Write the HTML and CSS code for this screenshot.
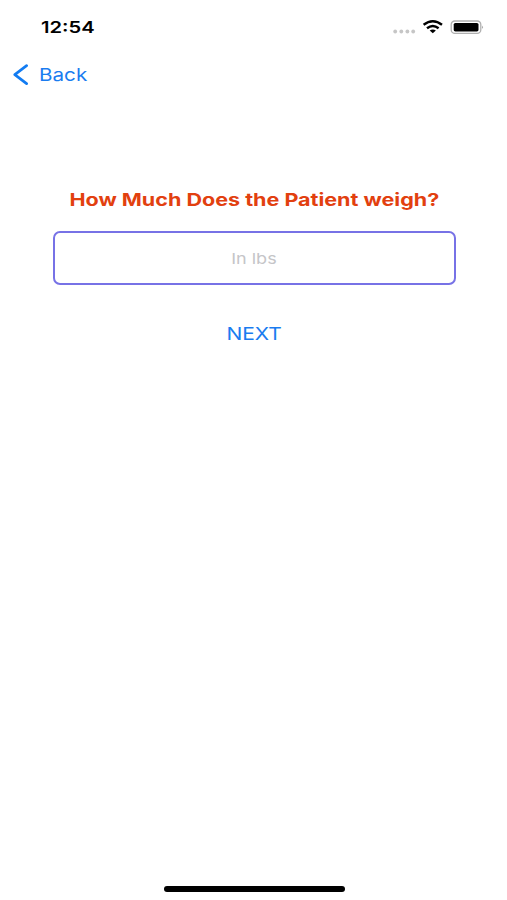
FILE: index.html
```html
<!DOCTYPE html>
<html lang="en">
<head>
<meta charset="utf-8">
<title>Patient weight</title>
<link rel="stylesheet" href="styles.css">
</head>
<body>
<div class="screen">
  <header class="status">
    <span class="time">12:54</span>
    <svg class="indicators" width="92" height="18" viewBox="0 0 92 18" aria-hidden="true">
      <g fill="#c6c6c6"><circle cx="3.2" cy="8.5" r="1.9"/><circle cx="9.3" cy="8.5" r="1.9"/><circle cx="15.4" cy="8.5" r="1.9"/><circle cx="21.2" cy="8.5" r="1.9"/></g>
      <g transform="translate(30.5 -3)" fill="none" stroke="#000" stroke-width="2.4">
        <path d="M1.1 4.8Q10.3-2.3 19.5 4.8"/>
        <path d="M4.5 8.3Q10.3 3.7 16.1 8.3"/>
        <path d="M7.2 10.5Q10.3 8.4 13.4 10.5L10.3 13.3Z" fill="#000" stroke="none"/>
      </g>
      <rect x="59.2" y="-2" width="29.6" height="12.4" rx="3.6" fill="#fff" stroke="#b0b0b0" stroke-width="1.3"/>
      <rect x="61.7" y="0" width="24.8" height="8.4" rx="1.6" fill="#000"/>
      <path d="M90.2 2.5Q92 4.1 90.2 5.9Z" fill="#8e8e8e"/>
    </svg>
  </header>
  <nav class="nav">
    <a class="back"><svg width="17" height="22" viewBox="0 0 17 22" aria-hidden="true"><path d="M14.6 1.6L2.8 10.6L14.6 19.6" fill="none" stroke="#127cf2" stroke-width="2.7" stroke-linecap="round" stroke-linejoin="round"/></svg><span class="back-label">Back</span></a>
  </nav>
  <main class="form">
    <h1 class="question"><span>How Much Does the Patient weigh?</span></h1>
    <div class="field"><span>In lbs</span></div>
    <div class="next"><span>NEXT</span></div>
  </main>
  <div class="home"></div>
</div>
</body>
</html>
```
FILE: styles.css
```css
* { box-sizing: border-box; }
body { margin: 0; background: #fff; font-family: Inter, sans-serif; }
.screen { width: 507px; height: 900px; display: flex; flex-direction: column; overflow: hidden; }
.status { height: 54px; padding: 0 23px 0 41px; display: flex; align-items: center; justify-content: space-between; }
.time { font-size: 16px; font-weight: 600; transform: scaleX(1.26); transform-origin: left; }
.indicators { margin-top: 10px; overflow: visible; }
.nav { height: 41px; padding-left: 11.5px; display: flex; align-items: center; }
.back { display: flex; align-items: center; gap: 10.5px; color: #1a7cf0; }
.back-label { font-size: 17.5px; transform: scaleX(1.18); transform-origin: left; }
.form { flex: 1; padding: 92px 51.5px 0 52.5px; display: flex; flex-direction: column; align-items: center; }
.question { margin: 0; height: 25px; line-height: 25px; font-size: 17.5px; font-weight: 700; color: #e2400f; white-space: nowrap; }
.question span, .field span, .next span { display: inline-block; transform: scaleX(1.2); }
.question span { transform: scaleX(1.23); }
.field { width: 403px; height: 54px; margin-top: 19px; border: 2px solid #7772e6; border-radius: 7px; display: flex; align-items: center; justify-content: center; font-size: 15px; color: #c5c5c8; }
.next { margin-top: 36px; line-height: 26px; font-size: 17.5px; color: #1a7cf0; }
.home { width: 181px; height: 6px; margin: 0 auto 8px 164px; border-radius: 3px; background: #000; }
```
